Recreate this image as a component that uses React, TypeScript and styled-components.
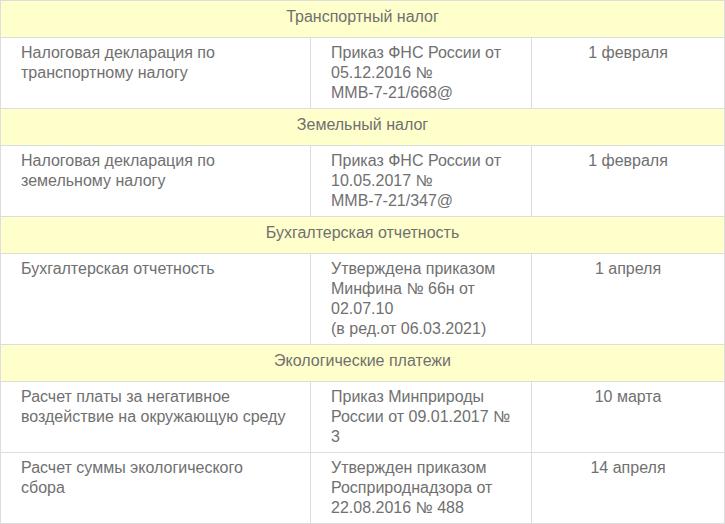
import React from "react";
import styled, { createGlobalStyle } from "styled-components";

const Global = createGlobalStyle`
  html, body { margin: 0; padding: 0; background: #fff; }
  body { font-family: "Liberation Sans", Arial, sans-serif; }
`;

const Table = styled.table`
  width: 724px;
  border-collapse: collapse;
  table-layout: fixed;
  font-family: "Liberation Sans", Arial, sans-serif;
  font-size: 16px;
  line-height: 20px;
  color: #707070;
`;

const Col = styled.col<{ $w: number }>`
  width: ${(p) => p.$w}px;
`;

const SectionCell = styled.td`
  background: #ffffcc;
  border: 1px solid #dddddd;
  text-align: center;
  padding: 6px 20px 10px;
`;

const Cell = styled.td<{ $center?: boolean; $padRight?: number }>`
  border: 1px solid #dddddd;
  vertical-align: top;
  padding: 5px ${(p) => p.$padRight ?? 20}px 5px 20px;
  text-align: ${(p) => (p.$center ? "center" : "left")};
`;

const NoWrap = styled.span`
  white-space: nowrap;
`;

type Row = { name: React.ReactNode; doc: React.ReactNode; date: string };
type Section = { title: string; rows: Row[] };

const data: Section[] = [
  {
    title: "Транспортный налог",
    rows: [
      {
        name: "Налоговая декларация по транспортному налогу",
        doc: (
          <>
            Приказ ФНС России от 05.12.2016 № <NoWrap>ММВ-7-21/668@</NoWrap>
          </>
        ),
        date: "1 февраля",
      },
    ],
  },
  {
    title: "Земельный налог",
    rows: [
      {
        name: "Налоговая декларация по земельному налогу",
        doc: (
          <>
            Приказ ФНС России от 10.05.2017 № <NoWrap>ММВ-7-21/347@</NoWrap>
          </>
        ),
        date: "1 февраля",
      },
    ],
  },
  {
    title: "Бухгалтерская отчетность",
    rows: [
      {
        name: "Бухгалтерская отчетность",
        doc: (
          <>
            Утверждена приказом Минфина № 66н от 02.07.10
            <br />
            (в ред.от 06.03.2021)
          </>
        ),
        date: "1 апреля",
      },
    ],
  },
  {
    title: "Экологические платежи",
    rows: [
      {
        name: "Расчет платы за негативное воздействие на окружающую среду",
        doc: "Приказ Минприроды России от 09.01.2017 № 3",
        date: "10 марта",
      },
      {
        name: "Расчет суммы экологического сбора",
        doc: "Утвержден приказом Росприроднадзора от 22.08.2016 № 488",
        date: "14 апреля",
      },
    ],
  },
];

export default function App() {
  return (
    <>
      <Global />
      <Table>
        <colgroup>
          <Col $w={310} />
          <Col $w={221} />
          <Col $w={193} />
        </colgroup>
        <tbody>
          {data.map((s) => (
            <React.Fragment key={s.title}>
              <tr>
                <SectionCell colSpan={3}>{s.title}</SectionCell>
              </tr>
              {s.rows.map((r, i) => (
                <tr key={i}>
                  <Cell $padRight={24}>{r.name}</Cell>
                  <Cell $padRight={18}>{r.doc}</Cell>
                  <Cell $center>{r.date}</Cell>
                </tr>
              ))}
            </React.Fragment>
          ))}
        </tbody>
      </Table>
    </>
  );
}
